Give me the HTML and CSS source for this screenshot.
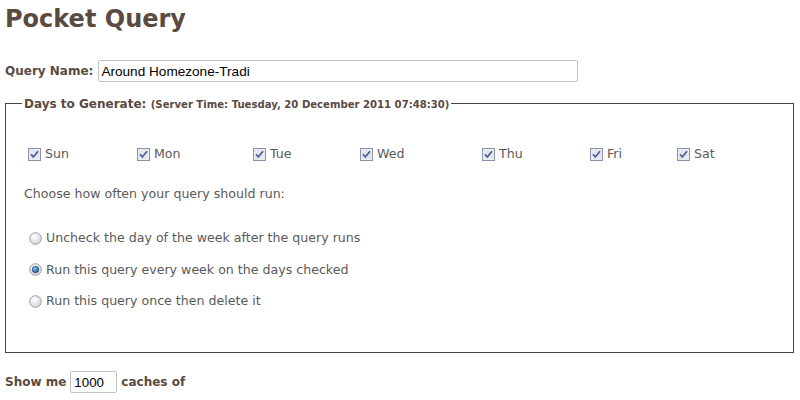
FILE: index.html
```html
<!DOCTYPE html>
<html>
<head>
<meta charset="utf-8">
<link rel="stylesheet" href="styles.css">
</head>
<body>
<h1 class="title">Pocket Query</h1>
<div class="name-row">
  <span class="lbl">Query Name:</span>
  <span class="textbox wide">Around Homezone-Tradi</span>
</div>
<fieldset class="days">
  <legend class="legend"><span class="leg-main">Days to Generate:</span> <span class="leg-small">(Server Time: Tuesday, 20 December 2011 07:48:30)</span></legend>
  <div class="day-grid">
    <label class="day"><svg class="cb" width="13" height="13" viewBox="0 0 13 13"><rect x="0.5" y="0.5" width="12" height="12" fill="#eef0f6" stroke="#8a93a8"/><rect x="1.5" y="1.5" width="10" height="10" fill="#e4e7f0"/><path d="M3 6.3 L5.3 9 L10 3.2" fill="none" stroke="#4a5c92" stroke-width="1.7"/></svg>Sun</label>
    <label class="day"><svg class="cb" width="13" height="13" viewBox="0 0 13 13"><rect x="0.5" y="0.5" width="12" height="12" fill="#eef0f6" stroke="#8a93a8"/><rect x="1.5" y="1.5" width="10" height="10" fill="#e4e7f0"/><path d="M3 6.3 L5.3 9 L10 3.2" fill="none" stroke="#4a5c92" stroke-width="1.7"/></svg>Mon</label>
    <label class="day"><svg class="cb" width="13" height="13" viewBox="0 0 13 13"><rect x="0.5" y="0.5" width="12" height="12" fill="#eef0f6" stroke="#8a93a8"/><rect x="1.5" y="1.5" width="10" height="10" fill="#e4e7f0"/><path d="M3 6.3 L5.3 9 L10 3.2" fill="none" stroke="#4a5c92" stroke-width="1.7"/></svg>Tue</label>
    <label class="day"><svg class="cb" width="13" height="13" viewBox="0 0 13 13"><rect x="0.5" y="0.5" width="12" height="12" fill="#eef0f6" stroke="#8a93a8"/><rect x="1.5" y="1.5" width="10" height="10" fill="#e4e7f0"/><path d="M3 6.3 L5.3 9 L10 3.2" fill="none" stroke="#4a5c92" stroke-width="1.7"/></svg>Wed</label>
    <label class="day"><svg class="cb" width="13" height="13" viewBox="0 0 13 13"><rect x="0.5" y="0.5" width="12" height="12" fill="#eef0f6" stroke="#8a93a8"/><rect x="1.5" y="1.5" width="10" height="10" fill="#e4e7f0"/><path d="M3 6.3 L5.3 9 L10 3.2" fill="none" stroke="#4a5c92" stroke-width="1.7"/></svg>Thu</label>
    <label class="day"><svg class="cb" width="13" height="13" viewBox="0 0 13 13"><rect x="0.5" y="0.5" width="12" height="12" fill="#eef0f6" stroke="#8a93a8"/><rect x="1.5" y="1.5" width="10" height="10" fill="#e4e7f0"/><path d="M3 6.3 L5.3 9 L10 3.2" fill="none" stroke="#4a5c92" stroke-width="1.7"/></svg>Fri</label>
    <label class="day"><svg class="cb" width="13" height="13" viewBox="0 0 13 13"><rect x="0.5" y="0.5" width="12" height="12" fill="#eef0f6" stroke="#8a93a8"/><rect x="1.5" y="1.5" width="10" height="10" fill="#e4e7f0"/><path d="M3 6.3 L5.3 9 L10 3.2" fill="none" stroke="#4a5c92" stroke-width="1.7"/></svg>Sat</label>
  </div>
  <p class="choose">Choose how often your query should run:</p>
  <div class="radios">
    <label class="radio"><svg class="rb" width="13" height="13" viewBox="0 0 13 13"><defs><radialGradient id="g1" cx="0.4" cy="0.35" r="0.7"><stop offset="0" stop-color="#ffffff"/><stop offset="1" stop-color="#d0d3d8"/></radialGradient></defs><circle cx="6.5" cy="6.5" r="5.8" fill="url(#g1)" stroke="#9a9ea6"/></svg>Uncheck the day of the week after the query runs</label>
    <label class="radio"><svg class="rb" width="13" height="13" viewBox="0 0 13 13"><defs><radialGradient id="g2" cx="0.4" cy="0.35" r="0.7"><stop offset="0" stop-color="#ffffff"/><stop offset="1" stop-color="#d0d3d8"/></radialGradient><radialGradient id="g3" cx="0.4" cy="0.35" r="0.7"><stop offset="0" stop-color="#8fc9f0"/><stop offset="1" stop-color="#0f4c8a"/></radialGradient></defs><circle cx="6.5" cy="6.5" r="5.8" fill="url(#g2)" stroke="#9a9ea6"/><circle cx="6.5" cy="6.5" r="3.3" fill="url(#g3)" stroke="#1a3f66" stroke-width="0.6"/></svg>Run this query every week on the days checked</label>
    <label class="radio"><svg class="rb" width="13" height="13" viewBox="0 0 13 13"><defs><radialGradient id="g4" cx="0.4" cy="0.35" r="0.7"><stop offset="0" stop-color="#ffffff"/><stop offset="1" stop-color="#d0d3d8"/></radialGradient></defs><circle cx="6.5" cy="6.5" r="5.8" fill="url(#g4)" stroke="#9a9ea6"/></svg>Run this query once then delete it</label>
  </div>
</fieldset>
<div class="show-row">
  <span class="lbl">Show me</span>
  <span class="textbox small">1000</span>
  <span class="lbl">caches of</span>
</div>
</body>
</html>
```

FILE: styles.css
```css
html, body {
  margin: 0;
  padding: 0;
  background: #ffffff;
}
body {
  padding: 0 6px 0 5px;
  font-family: "DejaVu Sans", Verdana, sans-serif;
  font-size: 12.6px;
  color: #5a5a5a;
}
.title {
  margin: 0;
  font-size: 24px;
  line-height: 38px;
  font-weight: bold;
  color: #5a4a42;
}
.lbl {
  font-weight: bold;
  font-size: 12px;
  color: #5a4a42;
}
.name-row {
  margin-top: 22px;
  display: flex;
  align-items: center;
  gap: 5px;
}
.textbox {
  box-sizing: border-box;
  display: inline-flex;
  align-items: center;
  height: 22px;
  border: 1px solid #c2c2c2;
  border-radius: 2px;
  padding: 0 2px;
  font-family: "Liberation Sans", Arial, sans-serif;
  font-size: 13.6px;
  color: #000000;
}
.textbox.wide { width: 480px; }
.textbox.small { width: 47px; font-size: 13.3px; padding: 0 3px; }
.days {
  margin: 14px 0 0 0;
  border: 1px solid #444444;
  padding: 0 10px 0 18px;
  height: 257px;
  box-sizing: border-box;
}
.legend {
  padding: 0 2px;
  margin-left: -2px;
  color: #5a4a42;
  font-weight: bold;
}
.leg-main { font-size: 12px; }
.leg-small { font-size: 10.1px; }
.day-grid {
  display: grid;
  grid-template-columns: 109px 116px 107px 122px 108px 87px 1fr;
  margin-top: 35px;
  margin-left: 4px;
}
.day, .radio {
  display: flex;
  align-items: center;
  gap: 4px;
  line-height: 16px;
}
.cb, .rb { flex: none; }
.choose {
  margin: 24px 0 0 0;
  line-height: 16px;
}
.radios {
  margin-top: 28px;
  margin-left: 5px;
  display: flex;
  flex-direction: column;
  gap: 15.5px;
}
.show-row {
  margin-top: 18px;
  display: flex;
  align-items: center;
  gap: 4px;
}
```
